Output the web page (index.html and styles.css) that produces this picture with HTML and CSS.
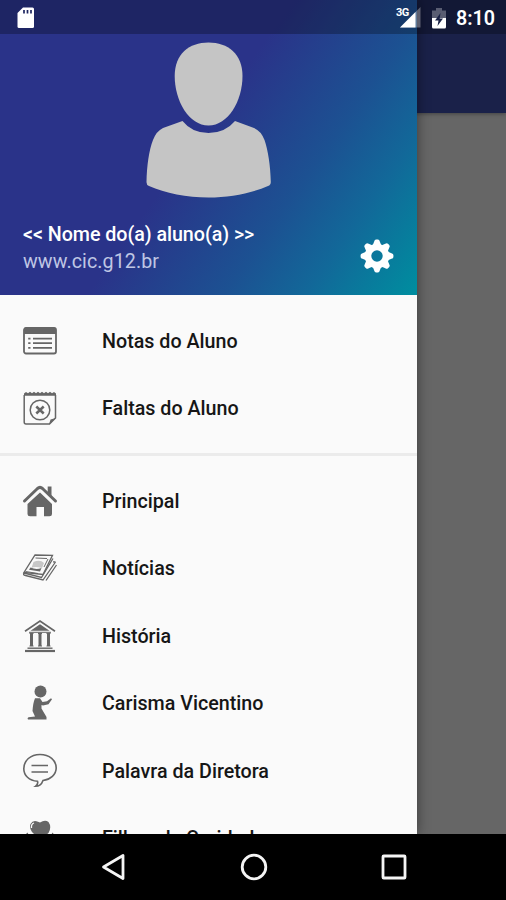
FILE: index.html
```
<!DOCTYPE html>
<html lang="pt-BR">
<head>
<meta charset="utf-8">
<title>Menu</title>
<link rel="stylesheet" href="styles.css">
</head>
<body>
<div class="screen">
  <div class="toolbar"></div>
  <aside class="drawer">
    <header class="profile">
      <svg class="avatar" viewBox="146 42 126 156">
        <path d="M208.500 42.500C228 42.500 242.500 54 242.500 76C242.500 101 228 125.500 208.500 125.500C189 125.500 174.700 101 174.700 76C174.700 54 189 42.500 208.500 42.500Z"/>
        <path d="M182.500 121Q192 133 208.500 133Q225 133 235 121L254 128Q261 131 264.500 140C268 150 270.500 166 270.800 182Q270.800 185 268 186C252 193 230 197.500 208.500 197.500C187 197.500 165 193 149 186Q146.400 185 146.500 182C146.800 166 149 150 153 140Q156.500 131 163 128Z"/>
      </svg>
      <div class="account">
        <div class="names">
          <div class="name">&lt;&lt; Nome do(a) aluno(a) &gt;&gt;</div>
          <div class="site">www.cic.g12.br</div>
        </div>
        <svg class="gear" viewBox="-17 -17 34 34">
          <circle r="9" fill="none" stroke="#fff" stroke-width="6.600"/>
          <g fill="#fff">
            <path id="tooth" d="M-4.200-11L-2.800-14.500Q-2.400-16.400-.9-16.400H.9Q2.400-16.400 2.800-14.500L4.200-11Z"/>
            <use href="#tooth" transform="rotate(45)"/><use href="#tooth" transform="rotate(90)"/><use href="#tooth" transform="rotate(135)"/><use href="#tooth" transform="rotate(180)"/><use href="#tooth" transform="rotate(225)"/><use href="#tooth" transform="rotate(270)"/><use href="#tooth" transform="rotate(315)"/>
          </g>
        </svg>
      </div>
    </header>
    <nav class="group first">
      <a class="item"><svg class="icon" viewBox="0 0 34 34">
        <rect class="line" x="1" y="4" width="32" height="25.500" rx="2" stroke-width="1.800"/>
        <path d="M1 4.500Q1 3.500 3 3.500H31Q33 3.500 33 5V10H1Z"/>
        <path class="line" d="M10 14.700H29M10 19.200H29M10 23.800H29" stroke-width="1.800"/>
        <path class="line" d="M5.200 14.700H7.500M5.200 19.200H7.500M5.200 23.800H7.500" stroke-width="1.800"/>
      </svg><span>Notas do Aluno</span></a>
      <a class="item"><svg class="icon" viewBox="0 0 34 34">
        <path class="line" d="M1.200 4V31Q1.200 33 3 33H26.500L32.500 27V4" stroke-width="1.500"/>
        <path d="M1 4.800V2.500L3 1 5 2.200 7 .8 9 2.200 11 .8 13 2.200 15 .8 17 2.200 19 .8 21 2.200 23 .8 25 2.200 27 .8 29 2.200 31 1 33 2.500V4.800Z"/>
        <path d="M26 33.500L27.500 28.500 33 27Z"/>
        <circle class="line" cx="17" cy="19" r="9.800" stroke-width="1.500"/>
        <path class="line" d="M13.300 15.500L20.700 22.500M20.700 15.500L13.300 22.500" stroke-width="2.500"/>
      </svg><span>Faltas do Aluno</span></a>
    </nav>
    <nav class="group second">
      <a class="item"><svg class="icon" viewBox="0 0 34 34">
        <path class="line" d="M1.500 17L14.500 4.500Q17 2.300 19.500 4.500L32.500 17" stroke-width="3" stroke-linecap="round"/>
        <path d="M24.700 2.500H28.500V12L24.700 8.500Z"/>
        <path d="M4.500 20L17 8.500 29 20V30Q29 32.300 26.500 32.300H21V23H13.500V32.300H7Q4.500 32.300 4.500 30Z"/>
      </svg><span>Principal</span></a>
      <a class="item"><svg class="icon" viewBox="0 0 34 34">
        <path class="line" d="M12 4L29.500 4.300 20 23.500 1 21.500Z" stroke-width="1.300"/>
        <path class="line" d="M1 22L18.500 26.500 30 7.500M1 22Q-.5 24 2.500 24.500L20 29 32.500 11M32.500 11L30 10.800M23 29.500L33.500 14" stroke-width="1.300"/>
        <path d="M10.500 11Q17 8 21 12L19 17Q12 15 8.500 17Z" opacity=".35"/>
        <path d="M7.500 16.500Q13 19 18.500 17L17 20.500 6 18.800Z"/>
        <path class="line" d="M12.500 7L24 7.500M25 8L21 16M2.500 20.500L15 22.500" stroke-width="1"/>
      </svg><span>Notícias</span></a>
      <a class="item"><svg class="icon" viewBox="0 0 34 34">
        <path class="line" d="M2 12.300L17 2 32 12.300" stroke-width="1.700"/>
        <path d="M17 5.300L26.500 11.700H7.500Z"/>
        <path class="line" d="M6 13.300H28" stroke-width="1"/>
        <path class="line" d="M8.500 14V27M17 14V27M25.500 14V27" stroke-width="3"/>
        <path class="line" d="M6.500 14.300H10.500M15 14.300H19M23.500 14.300H27.500M6.500 27H10.500M15 27H19M23.500 27H27.500" stroke-width="1.200"/>
        <path class="line" d="M4.500 29.200H29.500" stroke-width="1.400"/><path class="line" d="M2 32H32" stroke-width="2.200"/>
      </svg><span>História</span></a>
      <a class="item"><svg class="icon" viewBox="0 0 34 34">
        <circle cx="17.500" cy="5.500" r="6"/>
        <path d="M12 12.300H17L19.500 16 24 15.300 28 12.200 29 13.300 25.500 18.200 20 19.500 18.500 19V22.500L23.500 31V33.500H5Q3.800 32.300 5.500 31.300L12 30.500 9.500 25Q10 17 12 12.300Z"/>
      </svg><span>Carisma Vicentino</span></a>
      <a class="item"><svg class="icon" viewBox="0 0 34 34">
        <path class="line" d="M20 26.500C18.800 30 16.500 32.300 12.500 32.300Q15.500 30 14.500 27.300C6 26.500 .8 21.500 .8 14.700C.8 6.500 7.500 .5 17 .5S33.200 6.500 33.200 14C33.200 20.500 27.500 25.500 20 26.500Z" stroke-width="1.600"/>
        <path class="line" d="M8.500 11.500H25M8.500 18H25" stroke-width="1.600"/>
      </svg><span>Palavra da Diretora</span></a>
      <a class="item"><svg class="icon" viewBox="0 0 34 34">
        <path d="M17 19L9 11Q6 7 7.500 3Q10-1.500 15 .7L17 1.500Q22-1.500 25.500 1Q29 6 25.500 12Z"/>
        <path d="M8.500 7Q8 3 11 2" fill="none" stroke="#fafafa" stroke-width="1.300"/>
        <path d="M2 14L4.500 11.500 8 18H2ZM31.500 14L29.500 11.500 26 18H32Z"/>
      </svg><span>Filhas da Caridade</span></a>
    </nav>
  </aside>
  <div class="status">
    <svg class="sd" viewBox="0 0 18 22"><path d="M6 .5H15.500Q17 .5 17 2V19.500Q17 21 15.500 21H2Q.5 21 .5 19.500V6Z" fill="#fff"/><path d="M7 3V6.500M10.500 3V6.500M14 3V6.500" stroke="#1d2561" stroke-width="1.700"/></svg>
    <div class="signal">
      <svg class="bars" viewBox="0 0 21 21"><path d="M20.500 0V20.500H0Z" fill="#fff" opacity=".32"/><path d="M15.500 5V20.500H0Z" fill="#fff"/></svg>
      <span class="network">3G</span>
    </div>
    <svg class="battery" viewBox="0 0 14 21"><path d="M4 0H10V2.500H14V10H0V2.500H4Z" fill="#fff" opacity=".3"/><path d="M0 10H14V19Q14 20.500 12.500 20.500H1.500Q0 20.500 0 19Z" fill="#fff"/><path d="M8.500 5L3 12.500H6.500L5.500 18 11 10.500H7.700Z" fill="#182044"/></svg>
    <span class="clock">8:10</span>
  </div>
  <footer class="navbar">
    <svg viewBox="0 0 28 28"><path d="M23 2.500V25.500L3.500 14Z"/></svg>
    <svg viewBox="0 0 28 28"><circle cx="14" cy="14" r="11.800"/></svg>
    <svg viewBox="0 0 28 28"><rect x="3" y="3" width="22" height="22" rx=".8"/></svg>
  </footer>
</div>
</body>
</html>
```
FILE: styles.css
```
* { box-sizing: border-box; }
body { margin: 0; font-family: Roboto, "Liberation Sans", sans-serif; }
.screen { position: relative; width: 506px; height: 900px; overflow: hidden; background: #666; }
.toolbar { height: 113px; background: #1a2149; box-shadow: 0 1px 4px rgba(0,0,0,.35); }
.drawer {
  position: absolute; left: 0; top: 0; width: 417px; height: 834px; overflow: hidden;
  background: #fafafa; box-shadow: 0 0 12px rgba(0,0,0,.45);
}
.profile {
  height: 295px; padding-top: 42px; display: flex; flex-direction: column;
  background: linear-gradient(125deg, #2a3389 0%, #2a3389 47%, #1c5192 69%, #126899 82%, #008c9f 99%);
}
.avatar { width: 126px; height: 156px; margin-left: 146px; fill: #c5c5c5; flex: none; }
.account { display: flex; justify-content: space-between; padding: 22px 23px 0; }
.name, .site { line-height: 26px; font-size: 19.700px; white-space: nowrap; }
.name { color: #fff; font-weight: 500; margin-top: 2px; letter-spacing: -.05px; }
.site { color: #bfc6e4; margin-top: 1px; letter-spacing: .07px; }
.gear { width: 34px; height: 34px; margin-top: 19px; }
.first { padding: 12px 0 11px; }
.second { padding-top: 11px; border-top: 3px solid #ebebeb; }
.item { display: flex; align-items: center; height: 67.500px; padding-left: 23px; gap: 45px; }
.icon { width: 34px; height: 34px; fill: #666; flex: none; overflow: visible; }
.icon .line { fill: none; stroke: #666; }
.item span { padding-top: 2px; font-size: 19.700px; font-weight: 500; color: #161616; white-space: nowrap; line-height: 26px; }
.status {
  position: absolute; top: 0; left: 0; width: 506px; height: 34px; padding: 0 11px 0 17px;
  display: flex; align-items: center; background: rgba(0,0,0,.27);
}
.sd { width: 18px; height: 22px; margin-top: 1px; }
.signal { position: relative; width: 21px; height: 21px; margin: 1px 0 0 auto; }
.bars { width: 21px; height: 21px; display: block; }
.network { position: absolute; left: -4px; top: -1px; color: #fff; font-size: 11px; line-height: 13px; font-weight: 700; letter-spacing: -.5px; }
.battery { width: 14px; height: 21px; margin: 2px 10px 0 11px; }
.clock { color: #fff; font-size: 19.700px; font-weight: 600; line-height: 26px; margin-top: 4px; }
.navbar {
  position: absolute; left: 0; bottom: 0; width: 506px; height: 66px; background: #000;
  display: flex; justify-content: space-between; padding: 19px 98px 0 100px;
}
.navbar svg { width: 28px; height: 28px; fill: none; stroke: #f5f5f5; stroke-width: 2.800; stroke-linejoin: round; }
```
